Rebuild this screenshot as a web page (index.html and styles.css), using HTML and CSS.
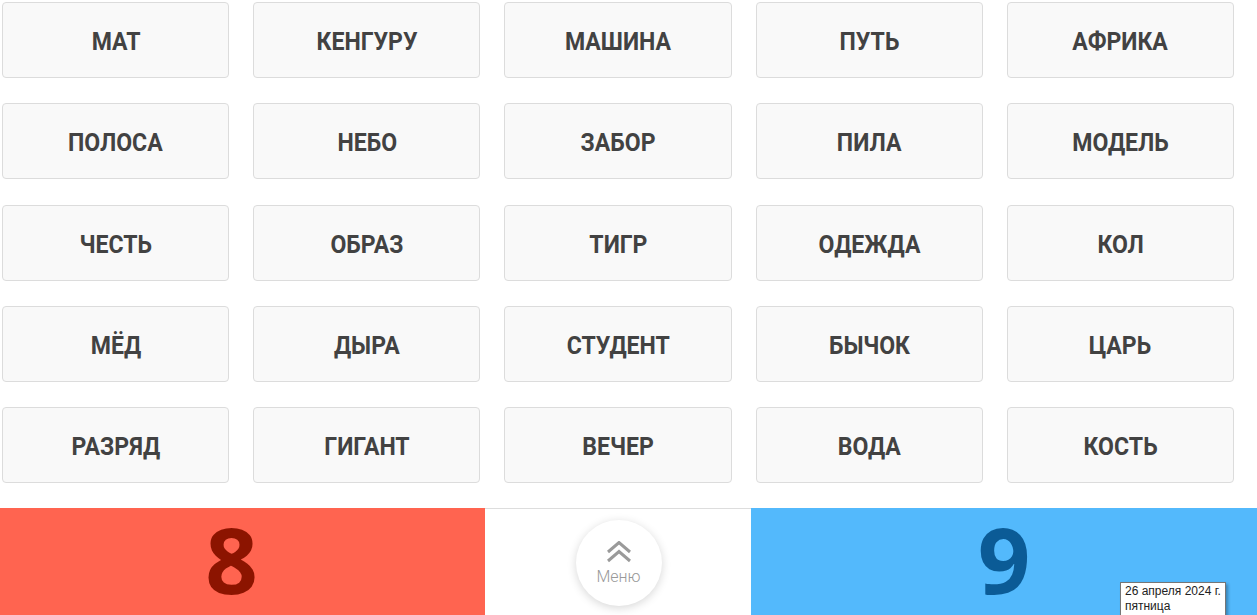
FILE: index.html
```html
<!DOCTYPE html>
<html lang="ru">
<head>
<meta charset="utf-8">
<title>Слова</title>
<link rel="stylesheet" href="styles.css">
</head>
<body>
<main class="board">
  <div class="card"><span>МАТ</span></div>
  <div class="card"><span>КЕНГУРУ</span></div>
  <div class="card"><span>МАШИНА</span></div>
  <div class="card"><span>ПУТЬ</span></div>
  <div class="card"><span>АФРИКА</span></div>
  <div class="card"><span>ПОЛОСА</span></div>
  <div class="card"><span>НЕБО</span></div>
  <div class="card"><span>ЗАБОР</span></div>
  <div class="card"><span>ПИЛА</span></div>
  <div class="card"><span>МОДЕЛЬ</span></div>
  <div class="card"><span>ЧЕСТЬ</span></div>
  <div class="card"><span>ОБРАЗ</span></div>
  <div class="card"><span>ТИГР</span></div>
  <div class="card"><span>ОДЕЖДА</span></div>
  <div class="card"><span>КОЛ</span></div>
  <div class="card"><span>МЁД</span></div>
  <div class="card"><span>ДЫРА</span></div>
  <div class="card"><span>СТУДЕНТ</span></div>
  <div class="card"><span>БЫЧОК</span></div>
  <div class="card"><span>ЦАРЬ</span></div>
  <div class="card"><span>РАЗРЯД</span></div>
  <div class="card"><span>ГИГАНТ</span></div>
  <div class="card"><span>ВЕЧЕР</span></div>
  <div class="card"><span>ВОДА</span></div>
  <div class="card"><span>КОСТЬ</span></div>
</main>
<footer class="score">
  <div class="team team-red"><span class="num">8</span></div>
  <div class="middle">
    <button class="menu-btn" type="button">
      <svg class="chev" width="26" height="22" viewBox="0 0 26 22" aria-hidden="true">
        <path d="M2 11 L13 1.5 L24 11" fill="none" stroke="#9a9a9a" stroke-width="3"/>
        <path d="M2 20 L13 10.5 L24 20" fill="none" stroke="#9a9a9a" stroke-width="3"/>
      </svg>
      <span class="menu-label">Меню</span>
    </button>
  </div>
  <div class="team team-blue"><span class="num">9</span>
    <div class="tooltip">26 апреля 2024 г.<br>пятница</div>
  </div>
</footer>
</body>
</html>
```
FILE: styles.css
```css
html, body {
  margin: 0;
  padding: 0;
  background: #ffffff;
  overflow: hidden;
}
body {
  width: 1257px;
  height: 615px;
  font-family: Roboto, "Noto Sans", sans-serif;
}
.board {
  display: grid;
  grid-template-columns: repeat(5, 227.2px);
  grid-template-rows: repeat(5, 76px);
  column-gap: 24px;
  row-gap: 25.3px;
  padding: 2px 0 25px 2px;
  box-sizing: border-box;
  height: 508px;
}
.card {
  background: #f9f9f9;
  border: 1px solid #dcdcdc;
  border-radius: 4px;
  box-sizing: border-box;
  display: flex;
  align-items: center;
  justify-content: center;
}
.card span {
  display: inline-block;
  font-family: Roboto, "Noto Sans", sans-serif;
  font-weight: 700;
  font-size: 26.5px;
  color: #424242;
  transform: scaleX(0.87);
  white-space: nowrap;
  line-height: 1.2;
  margin-top: 2px;
}
.score {
  display: flex;
  height: 107px;
}
.team {
  display: flex;
  align-items: center;
  justify-content: center;
  position: relative;
}
.team-red {
  width: 485px;
  background: #ff6450;
  padding-right: 22px;
  box-sizing: border-box;
}
.team-blue {
  flex: 1;
  background: #53b9fc;
}
.num {
  font-family: "Open Sans", Roboto, sans-serif;
  font-weight: 700;
  font-size: 92px;
  line-height: 1.2;
  margin-top: -4px;
}
.team-red .num { color: #8c1400; }
.team-blue .num { color: #0b5b96; }
.middle {
  width: 266px;
  border-top: 1px solid #dddddd;
  box-sizing: border-box;
  display: flex;
  justify-content: center;
  align-items: center;
  background: #ffffff;
}
.menu-btn {
  width: 86px;
  height: 86px;
  border-radius: 50%;
  border: none;
  background: #ffffff;
  box-shadow: 0 2px 10px rgba(0,0,0,0.16);
  display: flex;
  flex-direction: column;
  align-items: center;
  justify-content: center;
  padding: 0;
  margin-left: 1px;
  margin-top: 1px;
  cursor: pointer;
}
.chev {
  display: block;
  margin-bottom: 6px;
}
.menu-label {
  font-family: Roboto, "Noto Sans", sans-serif;
  font-weight: 300;
  font-size: 16px;
  color: #999999;
  line-height: 1;
}
.tooltip {
  position: absolute;
  left: 369px;
  top: 74px;
  background: #ffffff;
  border: 1px solid #767676;
  box-shadow: 2px 2px 3px rgba(0,0,0,0.3);
  font-family: "Liberation Sans", "Noto Sans", sans-serif;
  font-size: 12px;
  line-height: 15px;
  color: #222222;
  padding: 1px 4px 2px;
  box-sizing: border-box;
  white-space: nowrap;
}
```
